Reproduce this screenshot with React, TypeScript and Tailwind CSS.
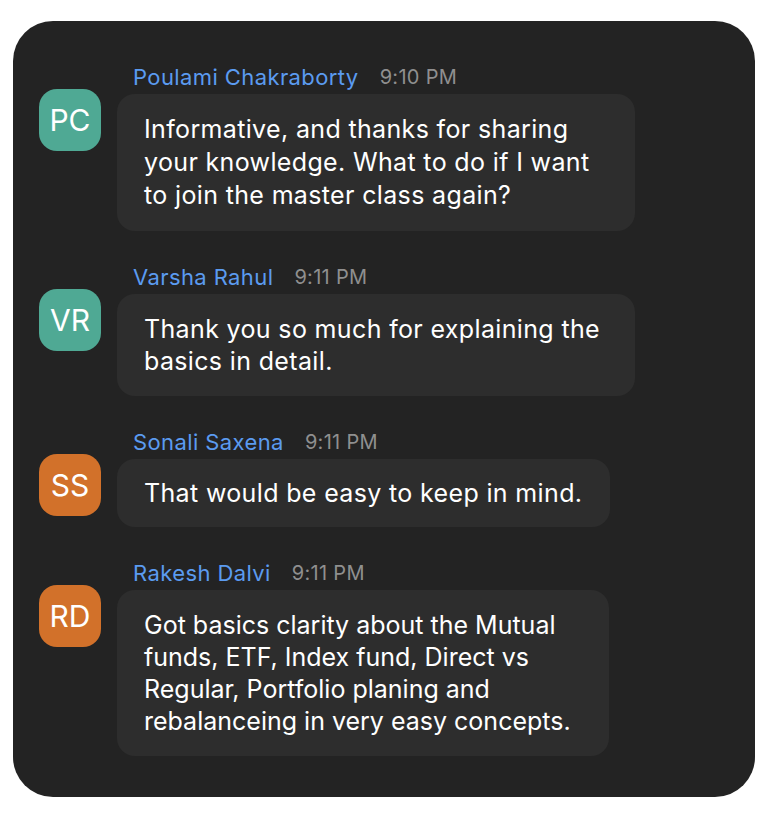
const messages = [
  {
    initials: "PC",
    avatar: "bg-[#4fa994]",
    name: "Poulami Chakraborty",
    time: "9:10 PM",
    bubble: "w-[518px] py-[19px] pr-[27px] leading-[33px] tracking-[0.35px]",
    text: "Informative, and thanks for sharing your knowledge. What to do if I want to join the master class again?",
  },
  {
    initials: "VR",
    avatar: "bg-[#4fa994]",
    name: "Varsha Rahul",
    time: "9:11 PM",
    bubble: "w-[518px] py-[19px] pr-[27px] leading-[32px] tracking-[0.35px]",
    text: "Thank you so much for explaining the basics in detail.",
  },
  {
    initials: "SS",
    avatar: "bg-[#d2712a]",
    name: "Sonali Saxena",
    time: "9:11 PM",
    bubble: "w-[493px] py-[18px] pr-[27px] leading-[32px] tracking-[0.35px]",
    text: "That would be easy to keep in mind.",
  },
  {
    initials: "RD",
    avatar: "bg-[#d2712a]",
    name: "Rakesh Dalvi",
    time: "9:11 PM",
    bubble: "w-[492px] py-[19px] pr-[10px] leading-[32px] tracking-[0px]",
    text: "Got basics clarity about the Mutual funds, ETF, Index fund, Direct vs Regular, Portfolio planing and rebalanceing in very easy concepts.",
  },
];

export default function App() {
  return (
    <div className="min-h-[818px] w-[776px] bg-white pt-[21px] pl-[13px] font-['Inter',sans-serif]">
      <section className="flex w-[742px] flex-col gap-[34px] rounded-[40px] bg-[#232323] pt-[44px] pb-[41px] pl-[26px]">
        {messages.map((message) => (
          <div key={message.initials} className="flex gap-[16px]">
            <div
              className={`mt-[24px] flex h-[62px] w-[62px] shrink-0 items-center justify-center rounded-[18px] text-[30px] text-white ${message.avatar}`}
            >
              {message.initials}
            </div>
            <div className="flex flex-col gap-[5px]">
              <div className="flex items-center gap-[21px] pl-[16px] leading-[24px]">
                <span className="text-[22px] tracking-[0.4px] text-[#5b9bf0]">{message.name}</span>
                <span className="text-[20px] tracking-[0.3px] text-[#8f8f8f]">{message.time}</span>
              </div>
              <div
                className={`rounded-[18px] bg-[#2d2d2d] pl-[27px] text-[25px] text-white ${message.bubble}`}
              >
                {message.text}
              </div>
            </div>
          </div>
        ))}
      </section>
    </div>
  );
}
